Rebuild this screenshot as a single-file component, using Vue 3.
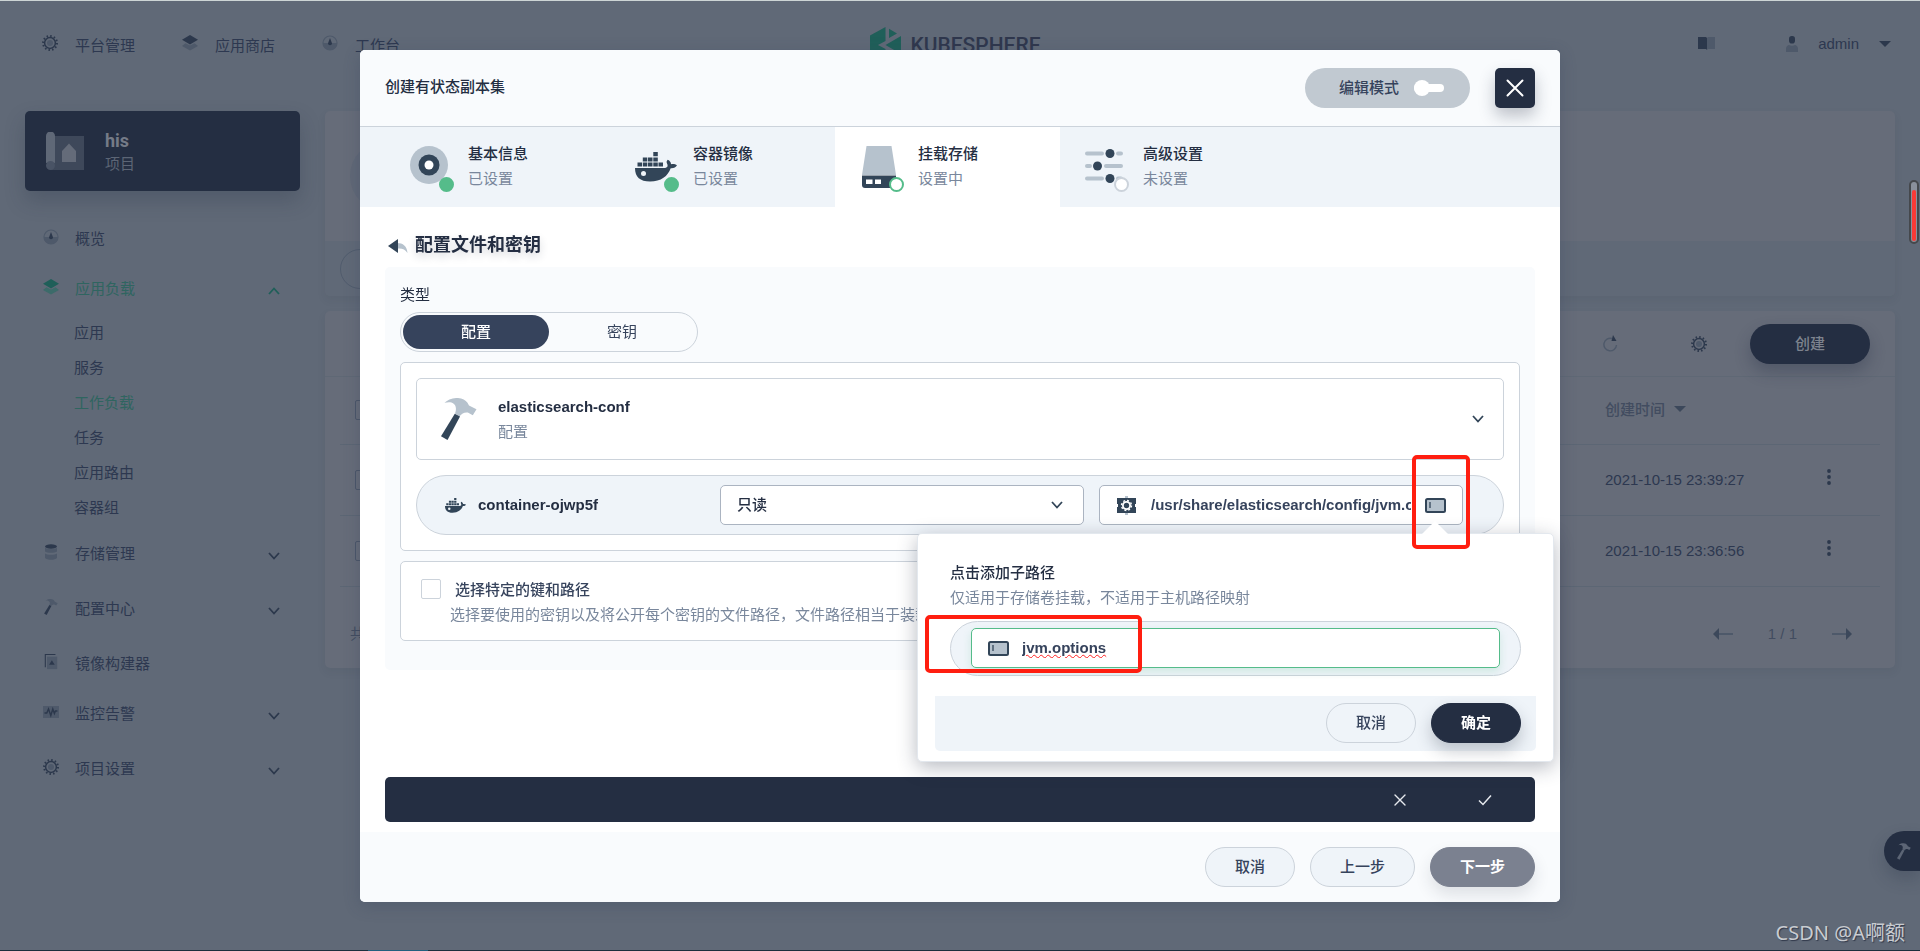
<script setup>
import { ref } from 'vue'

const topNav = [
  { label: '平台管理', icon: 'gear' },
  { label: '应用商店', icon: 'layers' },
  { label: '工作台', icon: 'dash' }
]

const menu = [
  { label: '概览', icon: 'dash' },
  {
    label: '应用负载',
    icon: 'layers',
    open: true,
    children: ['应用', '服务', '工作负载', '任务', '应用路由', '容器组']
  },
  { label: '存储管理', icon: 'db', fold: true },
  { label: '配置中心', icon: 'hammer', fold: true },
  { label: '镜像构建器', icon: 'builder' },
  { label: '监控告警', icon: 'monitor', fold: true },
  { label: '项目设置', icon: 'gear', fold: true }
]

const rows = ['2021-10-15 23:39:27', '2021-10-15 23:36:56']

const steps = [
  { title: '基本信息', note: '已设置', icon: 'disc', box: '0 0 38 38', state: 'done' },
  { title: '容器镜像', note: '已设置', icon: 'docker', box: '0 0 42 30', state: 'done' },
  { title: '挂载存储', note: '设置中', icon: 'drive', box: '0 0 34 42', state: 'now' },
  { title: '高级设置', note: '未设置', icon: 'sliders', box: '0 0 38 34', state: 'todo' }
]

const mode = ref('配置')
const access = ref('只读')
const mountPath = ref('/usr/share/elasticsearch/config/jvm.options')
const subPath = ref('jvm.options')
const pickKeys = ref(false)
</script>

<template>
  <div class="page">
    <svg class="sprite" aria-hidden="true">
      <symbol id="gear" viewBox="0 0 16 16">
        <circle class="ink-line" cx="8" cy="8" r="7" stroke-width="2" stroke-dasharray="1.500 2.165" />
        <circle class="ink-line" cx="8" cy="8" r="5.400" stroke-width="1.500" />
        <circle class="soft" cx="8" cy="8" r="3" />
      </symbol>
      <symbol id="layers" viewBox="0 0 16 16">
        <path class="soft" d="M3.500 8.200 8 10.600l4.500-2.400L16 11l-8 4.600L0 11z" />
        <path class="ink" d="M8 0l8 4.700-8 4.700-8-4.700z" />
      </symbol>
      <symbol id="dash" viewBox="0 0 16 16">
        <circle class="soft-line" cx="8" cy="8" r="7" stroke-width="1.200" />
        <path class="soft" d="M1 8h14a7 7 0 0 1-14 0z" />
        <path class="ink" d="M8 3l2 5.200a2 2 0 1 1-4 0z" />
      </symbol>
      <symbol id="db" viewBox="0 0 16 16">
        <path class="soft" d="M2 3.500c2 2 10 2 12 0v4c-2 1.800-10 1.800-12 0zM2 9.500c2 1.800 10 1.800 12 0v4.500c-2 2.400-10 2.400-12 0z" />
        <ellipse class="ink" cx="8" cy="2.500" rx="6" ry="2.200" />
      </symbol>
      <symbol id="hammer" viewBox="0 0 36 42">
        <path class="soft" d="M3.500 4.700C8 1 12 0 17 0c4.500.2 7.500 2 9.500 4.800L28 7.500l7.500 3.700-3.700 6-5-2.700c-3.500-.5-6 1-8.200 3.700L14 15.500c2-5 1-9.500-3.500-11-2.200-.5-4.500-.2-7 .2z" />
        <path class="ink" d="M13.800 15.800 19 18.500 6.500 42 0 38.300z" />
      </symbol>
      <symbol id="builder" viewBox="0 0 16 18">
        <path class="soft" d="M4 3h11v14H3.500V3z" />
        <path class="ink" d="M1 0h12v1.200H2.200V15H1zM9 7l3.200 5H5.800z" />
      </symbol>
      <symbol id="monitor" viewBox="0 0 16 16">
        <path class="soft" d="M0 2h16v12H0z" />
        <path class="ink-line" d="M1.500 9h2.300l1.700-4 2.300 6.500 2-6.500 1.600 4.500 1-2.500h2" stroke-width="1.400" />
      </symbol>
      <symbol id="disc" viewBox="0 0 38 38">
        <circle class="soft" cx="19" cy="19" r="19" />
        <circle class="ink" cx="19" cy="19" r="10.500" />
        <circle cx="19" cy="19" r="4.500" fill="#fff" />
      </symbol>
      <symbol id="docker" viewBox="0 0 42 30">
        <path class="ink" d="M2.500 10.500H7v4H2.500zM7.800 10.500h4.500v4H7.800zM13 10.500h4.500v4H13zM18.300 10.500h4.500v4h-4.500zM23.500 10.500H28v4h-4.500zM7.800 5.500h4.500v4H7.800zM13 5.500h4.500v4H13zM18.300 5.500h4.500v4h-4.500zM18.300 0h4.500v4.200h-4.500z" />
        <path class="ink" d="M0 16h29c3 0 4.500-1.500 3-4.500-.8-1.700-.2-3 .8-3.800 2 1 3.300 2.500 3.200 4.500 2-.6 4.300-.2 6 1-1.200 2.200-3.200 3.200-6.300 3C33 24 26 29.500 15 29.500 5 29.500 0 25 0 16z" />
        <circle cx="8.500" cy="21.500" r="2.500" fill="#eff4f9" />
      </symbol>
      <symbol id="drive" viewBox="0 0 34 42">
        <path class="soft" d="M4.500 0h25L34 29H0z" />
        <path class="ink" d="M0 29.500h34V39a3 3 0 0 1-3 3H3a3 3 0 0 1-3-3z" />
        <path d="M4 33.500h6.500v4.500H4zM13 33.500h6v4.500h-6z" fill="#fff" />
      </symbol>
      <symbol id="sliders" viewBox="0 0 38 34">
        <g class="soft">
          <rect x="0" y="2.500" width="19" height="4" rx="2" /><rect x="31" y="2.500" width="7" height="4" rx="2" />
          <rect x="0" y="15" width="7" height="4" rx="2" /><rect x="19" y="15" width="19" height="4" rx="2" />
          <rect x="0" y="27.500" width="19" height="4" rx="2" /><rect x="31" y="27.500" width="7" height="4" rx="2" />
        </g>
        <g class="ink">
          <circle cx="25" cy="4.500" r="4.500" /><circle cx="12.500" cy="17" r="4.500" /><circle cx="25" cy="29.500" r="4.500" />
        </g>
      </symbol>
      <symbol id="chevron" viewBox="0 0 12 12">
        <path class="ink-line" d="M1 3l5 5.500L11 3" stroke-width="1.800" />
      </symbol>
      <symbol id="cross" viewBox="0 0 18 18">
        <path d="M1.500 1.500l15 15M16.500 1.500l-15 15" fill="none" stroke="currentColor" stroke-width="2" stroke-linecap="round" />
      </symbol>
      <symbol id="folder" viewBox="0 0 21 15">
        <rect x="1" y="1" width="19" height="13" rx="1.500" fill="#b6c2cd" stroke="#324558" stroke-width="2" />
        <path d="M5 4v6" stroke="#324558" stroke-width="1.300" />
      </symbol>
    </svg>

    <header class="top">
      <nav class="top-nav">
        <a v-for="n in topNav" :key="n.label" href="#">
          <svg class="i16"><use :href="'#' + n.icon" /></svg>{{ n.label }}
        </a>
      </nav>
      <div class="logo">
        <svg viewBox="0 0 31 36" width="31" height="36" aria-hidden="true">
          <path d="M0 8.500 15.500 0v14L8 18l7.500 4v14L0 27.500zM19 1.800 27 6.500 19 11zM31 9v18L15.500 18z" fill="#1f5f59" />
        </svg>
        KUBESPHERE
      </div>
      <div class="top-user">
        <button class="bare book" aria-label="文档">
          <svg width="17" height="13" viewBox="0 0 17 13"><path class="ink" d="M0 0h8l1 1v12l-1-1H0z" /><path class="soft" d="M9 1l1-1h7v12h-7l-1 1z" /></svg>
        </button>
        <button class="bare user">
          <svg width="12" height="16" viewBox="0 0 12 16"><rect class="ink" x="3" y="0" width="6" height="7.500" rx="2.800" /><path class="soft" d="M0 13c0-3 2-4 3-4 1.500 1 4.500 1 6 0 1 0 3 1 3 4v3H0z" /></svg>
          <span>admin</span>
          <i class="caret"></i>
        </button>
      </div>
    </header>

    <div class="cols">
      <aside>
        <div class="project">
          <svg viewBox="0 0 38 38" width="38" height="38" aria-hidden="true">
            <path d="M8 4h30v34H4V30z" fill="#3e485a" />
            <path d="M0 4a4.500 4.500 0 0 1 9 0v27H0z" fill="#5f6877" />
            <circle cx="4.500" cy="33.500" r="4.500" fill="#495365" />
            <path d="M16 19l7-7.500 7 7.500v11H16z" fill="#646b79" />
          </svg>
          <div>
            <strong>his</strong>
            <p>项目</p>
          </div>
        </div>
        <ul class="menu">
          <li v-for="m in menu" :key="m.label" :class="{ open: m.open, fold: m.fold }">
            <a href="#">
              <svg class="i16"><use :href="'#' + m.icon" /></svg>
              <span>{{ m.label }}</span>
              <svg v-if="m.open || m.fold" class="i12"><use href="#chevron" /></svg>
            </a>
            <ul v-if="m.children">
              <li v-for="c in m.children" :key="c" :class="{ on: c === '工作负载' }"><a href="#">{{ c }}</a></li>
            </ul>
          </li>
        </ul>
      </aside>

      <main>
        <section class="card banner">
          <div class="banner-main"><span class="avatar"></span></div>
          <div class="banner-foot"><span class="ghost-pill"></span></div>
        </section>
        <section class="card">
          <div class="tools">
            <button class="bare" aria-label="刷新">
              <svg width="16" height="18" viewBox="0 0 16 18"><path class="soft-line" d="M9 3.500A6.300 6.300 0 1 0 13.500 10" stroke-width="1.400" /><path class="ink" d="M10 0l3.500 6H8.500z" /></svg>
            </button>
            <button class="bare" aria-label="设置"><svg class="i16"><use href="#gear" /></svg></button>
            <button class="create">创建</button>
          </div>
          <table>
            <thead>
              <tr>
                <th><input type="checkbox" aria-label="全选" /></th>
                <th class="time">创建时间 <i class="caret"></i></th>
                <th class="more"></th>
              </tr>
            </thead>
            <tbody>
              <tr v-for="r in rows" :key="r">
                <td><input type="checkbox" :aria-label="r" /></td>
                <td class="time">{{ r }}</td>
                <td class="more">
                  <button class="bare" aria-label="更多操作">
                    <svg width="4" height="18" viewBox="0 0 4 18"><circle class="ink" cx="2" cy="3" r="1.900" /><circle class="ink" cx="2" cy="9" r="1.900" /><circle class="ink" cx="2" cy="15" r="1.900" /></svg>
                  </button>
                </td>
              </tr>
            </tbody>
          </table>
          <div class="pager">
            <span class="total">共</span>
            <button class="bare" aria-label="上一页"><svg width="20" height="12" viewBox="0 0 20 12"><path class="soft" d="M5 5h15v2H5z" /><path class="mid" d="M0 6l6-6v12z" /></svg></button>
            <span>1 / 1</span>
            <button class="bare" aria-label="下一页"><svg width="20" height="12" viewBox="0 0 20 12"><path class="soft" d="M0 5h15v2H0z" /><path class="mid" d="M20 6l-6-6v12z" /></svg></button>
          </div>
        </section>
      </main>
    </div>

    <button class="toolbox" aria-label="工具箱"><svg width="14" height="17"><use href="#hammer" /></svg></button>
    <div class="scroll-mark"><i></i></div>
    <div class="watermark">CSDN @A啊额</div>
    <div class="edge"><i></i></div>

    <div class="mask">
      <div class="modal" role="dialog" aria-label="创建有状态副本集">
        <div class="modal-head">
          <h1>创建有状态副本集</h1>
          <button class="mode">编辑模式 <i class="switch"></i></button>
          <button class="close" aria-label="关闭"><svg width="18" height="18"><use href="#cross" /></svg></button>
        </div>

        <ol class="steps">
          <li v-for="s in steps" :key="s.title" :class="s.state">
            <div class="pic"><svg :viewBox="s.box" :class="s.icon"><use :href="'#' + s.icon" /></svg><i></i></div>
            <div class="step-text">
              <b>{{ s.title }}</b>
              <p>{{ s.note }}</p>
            </div>
          </li>
        </ol>

        <div class="body">
          <h2>
            <button class="bare" aria-label="返回">
              <svg width="20" height="14" viewBox="0 0 20 14"><path class="soft" d="M9 4c6 0 10 3 10.500 10C17 10 14 9 9 9.500z" /><path class="ink" d="M0 7l10-7v14z" /></svg>
            </button>
            配置文件和密钥
          </h2>

          <div class="panel">
            <div class="label">类型</div>
            <div class="segment">
              <button v-for="m in ['配置', '密钥']" :key="m" :class="{ on: mode === m }" @click="mode = m">{{ m }}</button>
            </div>

            <div class="box">
              <button class="config">
                <svg width="36" height="42"><use href="#hammer" /></svg>
                <span><b>elasticsearch-conf</b><small>配置</small></span>
                <svg class="i12"><use href="#chevron" /></svg>
              </button>

              <div class="container">
                <svg width="21" height="15"><use href="#docker" /></svg>
                <b>container-ojwp5f</b>
                <div class="field">
                  <select v-model="access" aria-label="读写模式"><option>只读</option></select>
                  <svg class="i12"><use href="#chevron" /></svg>
                </div>
                <div class="field path">
                  <svg width="19" height="19" viewBox="0 0 19 19" aria-hidden="true">
                    <path class="soft" d="M8 0h3v19H8z" />
                    <path class="ink" d="M0 2h19v6h-1v3h1v6H0v-6h1V8H0z" />
                    <circle cx="9.500" cy="9.500" r="5" fill="none" stroke="#fff" stroke-width="1.400" stroke-dasharray="1.960 1.960" />
                    <circle cx="9.500" cy="9.500" r="3.600" fill="none" stroke="#fff" stroke-width="1.800" />
                  </svg>
                  <input v-model="mountPath" type="text" aria-label="挂载路径" spellcheck="false" />
                  <button class="bare" aria-label="添加子路径"><svg width="21" height="15"><use href="#folder" /></svg></button>

                  <div class="pop">
                    <div class="pop-main">
                      <label for="sub">点击添加子路径</label>
                      <p>仅适用于存储卷挂载，不适用于主机路径映射</p>
                      <div class="sub">
                        <div class="sub-field">
                          <svg width="21" height="15"><use href="#folder" /></svg>
                          <input id="sub" v-model="subPath" type="text" spellcheck="false" />
                        </div>
                        <span class="red sub-red"></span>
                      </div>
                    </div>
                    <div class="pop-foot">
                      <button class="btn">取消</button>
                      <button class="btn dark">确定</button>
                    </div>
                  </div>
                  <span class="red path-red"></span>
                </div>
              </div>
            </div>

            <div class="box keys">
              <input id="keys" v-model="pickKeys" type="checkbox" />
              <div>
                <label for="keys">选择特定的键和路径</label>
                <p>选择要使用的密钥以及将公开每个密钥的文件路径，文件路径相当于装载路径</p>
              </div>
            </div>
          </div>

          <div class="confirm">
            <button class="bare" aria-label="放弃"><svg width="12" height="12"><use href="#cross" /></svg></button>
            <button class="bare" aria-label="确认"><svg width="14" height="12" viewBox="0 0 14 12"><path d="M1 6.500l4 4L13 1.500" fill="none" stroke="currentColor" stroke-width="1.500" /></svg></button>
          </div>
        </div>

        <div class="modal-foot">
          <button class="btn">取消</button>
          <button class="btn">上一步</button>
          <button class="btn dark off">下一步</button>
        </div>
      </div>
    </div>
  </div>
</template>

<style>
body {
  margin: 0;
  background: #606977;
}
</style>

<style scoped>
.page {
  --ink: #2c384c;
  --soft: #4e596a;
  position: relative;
  box-sizing: border-box;
  min-height: 100vh;
  overflow: hidden;
  border-top: 1px solid #cdd5d5;
  background: #606977;
  color: #2d3850;
  font: 15px/20px "Liberation Sans", "Noto Sans CJK SC", sans-serif;
}
.page *,
.page *::before {
  box-sizing: border-box;
}
.sprite {
  position: absolute;
  width: 0;
  height: 0;
}
.ink { fill: var(--ink); }
.soft { fill: var(--soft); }
.mid { fill: #3c485b; }
.ink-line { fill: none; stroke: var(--ink); }
.soft-line { fill: none; stroke: var(--soft); }
svg { display: block; flex: none; }
.i16 { width: 16px; height: 16px; }
.i12 { width: 12px; height: 12px; }
a { color: inherit; text-decoration: none; }
p, h1, h2, ul, ol { margin: 0; padding: 0; }
ul, ol { list-style: none; }
button, input, select { font: inherit; color: inherit; }
button { padding: 0; cursor: pointer; }
.bare { border: 0; background: none; }
.caret {
  display: inline-block;
  border: 6px solid transparent;
  border-top-color: var(--ink);
  border-bottom: 0;
}

/* top bar */
.top {
  display: grid;
  grid-template-columns: 1fr auto 1fr;
  align-items: center;
  height: 85px;
  padding: 0 29px 0 20px;
}
.top-nav { display: flex; gap: 47px; padding: 4px 0 0 22px; }
.top-nav a { display: flex; align-items: center; gap: 17px; }
.top-nav svg { margin-bottom: 6px; }
.logo {
  display: flex;
  align-items: center;
  gap: 9px;
  padding-top: 2px;
  color: #2f374d;
  font: 500 21px/36px Roboto, sans-serif;
}
.top-user { display: flex; justify-content: flex-end; gap: 71px; }
.user { display: flex; align-items: center; gap: 20px; }

/* sidebar */
.cols { display: flex; gap: 25px; padding: 25px; }
aside { flex: 0 0 275px; }
.project {
  display: flex;
  align-items: center;
  gap: 21px;
  height: 80px;
  padding: 0 21px;
  border-radius: 5px;
  background: #242e42;
  box-shadow: 0 10px 20px #242e4240;
  color: #5c6575;
}
.project strong { color: #757b87; font: bold 18px/26px Roboto, sans-serif; }
.menu { padding-top: 23px; }
.menu > li > a { display: flex; align-items: center; height: 50px; padding: 0 20px 0 18px; }
.menu > li > a > .i16 { margin-bottom: 4px; }
.menu > li > a > span { flex: 1; padding-left: 16px; }
.menu .i12 { margin-top: 4px; }
.fold { padding-bottom: 5px; }
.open { --ink: #1f5f59; --soft: #3c6b6a; color: #2f6560; }
.open .i12 { transform: rotate(180deg); }
.open ul { padding: 1px 0 4px 49px; color: #2d3850; }
.open li { line-height: 35px; }
.open .on { color: #2f6560; }

/* page content */
main { flex: 1; min-width: 0; }
.card {
  margin-bottom: 15px;
  overflow: hidden;
  border-radius: 5px;
  background: #666c79;
  box-shadow: 0 4px 8px #242e4214;
}
.banner-main { display: flex; align-items: center; height: 130px; padding-left: 25px; }
.avatar { width: 70px; height: 70px; border-radius: 50%; background: #606877; }
.banner-foot { padding: 8px 15px 7px; background: #606977; }
.ghost-pill { display: block; width: 120px; height: 40px; border: 1px solid #515c6d; border-radius: 20px; }
.tools {
  display: flex;
  align-items: center;
  justify-content: flex-end;
  height: 66px;
  padding-right: 25px;
  border-bottom: 1px solid #5f6875;
}
.tools .bare { margin-right: 72px; }
.tools .bare + .bare { margin-right: 43px; }
.create {
  width: 120px;
  height: 40px;
  border: 0;
  border-radius: 20px;
  background: #242e42;
  box-shadow: 0 8px 16px #242e4250;
  color: #7d838e;
  font-weight: 500;
}
table { width: calc(100% - 30px); margin: 0 15px; border-collapse: collapse; table-layout: fixed; }
th, td { height: 71px; padding: 0 15px; border-bottom: 1px solid #5c6674; text-align: left; }
th { height: 67px; color: #424c60; font-weight: 500; }
th .caret { margin: 0 0 3px 5px; border-top-color: #3c485b; }
.time { width: 188px; white-space: nowrap; }
.more { width: 102px; text-align: center; }
.more svg { display: inline-block; }
table input {
  display: block;
  width: 20px;
  height: 20px;
  margin: 0;
  appearance: none;
  border: 1px solid #4b5668;
  border-radius: 2px;
}
.pager {
  display: flex;
  align-items: center;
  gap: 35px;
  height: 68px;
  margin-top: 13px;
  padding: 0 43px 0 25px;
  color: #424c60;
}
.total { flex: 1; }

/* overlays at the window edge */
.toolbox {
  --ink: #5c6575;
  --soft: #5c6575;
  position: absolute;
  top: 830px;
  right: 0;
  width: 36px;
  height: 40px;
  padding-left: 13px;
  border: 0;
  border-radius: 20px 0 0 20px;
  background: #242e42;
  box-shadow: 0 8px 16px #242e4240;
}
.scroll-mark {
  position: absolute;
  top: 179px;
  right: 1px;
  width: 10px;
  height: 64px;
  padding: 8px 1px 1px;
  border: 2px solid #45484c;
  border-radius: 5px;
  background: #8a909b;
}
.scroll-mark i { display: block; height: 100%; border-radius: 2px; background: #f93a36; }
.watermark {
  position: absolute;
  right: 15px;
  bottom: 5px;
  color: #c9ccd1;
  font: 20px/26px "Noto Sans", "Noto Sans CJK SC", sans-serif;
  text-shadow: 1px 1px 1px #30384a;
}
.edge { position: absolute; right: 0; bottom: 0; left: 0; height: 1px; background: #1b2f3d; }
.edge i { display: block; width: 60px; height: 1px; margin-left: 368px; background: #22607e; }

/* dialog */
.mask {
  position: fixed;
  inset: 0;
  display: flex;
  justify-content: center;
  padding: 50px 0 49px;
  pointer-events: none;
}
.modal {
  --ink: #324558;
  --soft: #b6c2cd;
  display: flex;
  flex-direction: column;
  width: 1200px;
  border-radius: 5px;
  background: #fff;
  box-shadow: 0 4px 16px #36435c50;
  color: #242e42;
  pointer-events: auto;
}
.modal-head {
  display: flex;
  align-items: center;
  padding: 18px 25px;
  border-bottom: 1px solid #ccd3db;
  border-radius: 5px 5px 0 0;
  background: #f9fbfd;
}
h1 { flex: 1; padding-bottom: 2px; font-size: 15px; font-weight: 500; line-height: 20px; }
.mode {
  display: flex;
  align-items: center;
  justify-content: flex-end;
  gap: 15px;
  width: 165px;
  height: 40px;
  margin-right: 25px;
  padding-right: 26px;
  border: 0;
  border-radius: 20px;
  background: #c1c9d1;
  color: #36435c;
  font-weight: 500;
}
.switch { position: relative; width: 30px; height: 8px; border-radius: 4px; background: #fff; }
.switch::before {
  content: "";
  position: absolute;
  top: -4px;
  left: 0;
  width: 16px;
  height: 16px;
  border-radius: 50%;
  background: #fff;
}
.close {
  display: grid;
  place-items: center;
  width: 40px;
  height: 40px;
  border: 0;
  border-radius: 5px;
  background: #242e42;
  box-shadow: 0 8px 16px #242e4248;
  color: #fff;
}
.steps { display: flex; padding-left: 25px; background: #eff4f9; }
.steps li { display: flex; align-items: center; gap: 20px; width: 225px; height: 80px; padding-left: 25px; }
.steps .now { background: #fff; }
.step-text { padding-bottom: 2px; }
.steps b { font-weight: 500; line-height: 25px; }
.steps p { color: #79879c; line-height: 25px; }
.pic { position: relative; display: grid; place-items: center; width: 38px; height: 42px; }
.disc { width: 38px; height: 38px; margin-bottom: 4px; }
.docker { width: 42px; height: 30px; }
.drive { width: 34px; height: 42px; }
.sliders { width: 38px; height: 34px; margin-bottom: 2px; }
.pic i {
  position: absolute;
  right: -6px;
  bottom: -4px;
  width: 15px;
  height: 15px;
  border: 2px solid #ccd3db;
  border-radius: 50%;
  background: #fff;
}
.done .pic i { border-color: #55bc8a; background: #55bc8a; }
.now .pic i { border-color: #55bc8a; }

.body { flex: 1; display: flex; flex-direction: column; padding: 25px 25px 10px; }
h2 {
  display: flex;
  align-items: center;
  gap: 7px;
  padding: 1px 0 9px 3px;
  font-size: 18px;
  line-height: 25px;
  text-shadow: 0 4px 8px #242e4233;
}
.panel { padding: 15px 15px 29px; border-radius: 5px; background: #f9fbfd; }
.label { line-height: 25px; margin-bottom: 5px; }
.segment {
  display: grid;
  grid-template-columns: 1fr 1fr;
  width: 298px;
  height: 40px;
  padding: 2px;
  border: 1px solid #ccd3db;
  border-radius: 20px;
}
.segment button { border: 0; border-radius: 18px; background: none; color: #36435c; }
.segment .on { background: #36435c; color: #fff; font-weight: 500; }
.box { margin-top: 10px; padding: 15px; border: 1px solid #ccd3db; border-radius: 5px; background: #fff; }
.config {
  display: flex;
  align-items: center;
  gap: 21px;
  width: 100%;
  height: 82px;
  padding: 0 19px 0 24px;
  border: 1px solid #ccd3db;
  border-radius: 5px;
  background: #fff;
  text-align: left;
}
.config span { flex: 1; line-height: 25px; }
.config b, .config small { display: block; }
.config small { color: #79879c; font-size: 15px; }
.container {
  display: flex;
  align-items: center;
  gap: 12px;
  height: 60px;
  margin-top: 15px;
  padding: 0 40px 0 28px;
  border: 1px solid #ccd3db;
  border-radius: 30px;
  background: #eff4f9;
}
.container > b { flex: 1; }
.field {
  position: relative;
  display: flex;
  align-items: center;
  width: 364px;
  height: 40px;
  padding: 0 20px 0 16px;
  border: 1px solid #abb4c1;
  border-radius: 5px;
  background: #fff;
}
.field select {
  flex: 1;
  height: 100%;
  padding: 0;
  appearance: none;
  border: 0;
  background: none;
  font-weight: 500;
}
.field > .i12 { pointer-events: none; }
.field.path { margin-left: 3px; padding: 0 16px 0 17px; color: #36435c; }
.field input {
  flex: 1;
  min-width: 0;
  padding: 0;
  border: 0;
  outline: 0;
  background: none;
  font-weight: bold;
}
.path > input { margin: 0 14px 0 15px; }

.pop {
  position: absolute;
  z-index: 1;
  top: 47px;
  right: -92px;
  width: 637px;
  padding: 26px 17px 10px;
  border: 1px solid #e3e8ee;
  border-radius: 5px;
  background: #fff;
  box-shadow: 0 5px 20px #242e4255;
}
.pop::before {
  content: "";
  position: absolute;
  top: -13px;
  right: 105px;
  border: 13px solid transparent;
  border-top: 0;
  border-bottom-color: #fff;
}
.pop-main { padding: 0 15px; }
.pop label { display: block; color: #242e42; font-weight: 500; line-height: 25px; }
.pop p { color: #79879c; line-height: 25px; }
.sub {
  position: relative;
  height: 55px;
  margin: 11px 0 20px;
  padding: 6px 20px;
  border: 1px solid #ccd3db;
  border-radius: 28px;
  background: #eff4f9;
}
.sub-field {
  display: flex;
  align-items: center;
  gap: 13px;
  height: 40px;
  padding: 0 16px;
  border: 1px solid #55bc8a;
  border-radius: 5px;
  background: #fff;
  box-shadow: 0 4px 8px #55bc8a33;
}
.sub-field input { text-decoration: underline wavy #f22 1px; text-underline-offset: 1px; }
.pop-foot { display: flex; justify-content: flex-end; gap: 15px; padding: 7px 15px 8px; border-radius: 0 0 5px 5px; background: #eff4f9; }

.red { position: absolute; z-index: 2; border: 4px solid #ff1e10; border-radius: 5px; pointer-events: none; }
.path-red { top: -31px; right: -8px; width: 58px; height: 94px; }
.sub-red { top: -7px; left: -26px; width: 217px; height: 58px; }

.keys { display: flex; gap: 9px; padding: 15px 20px 13px; }
.keys input {
  width: 20px;
  height: 20px;
  margin: 2px 0 0;
  appearance: none;
  border: 1px solid #ccd3db;
  border-radius: 2px;
  background: #fff;
}
.keys label { display: block; padding-left: 5px; color: #36435c; font-weight: 500; line-height: 25px; }
.keys p { color: #79879c; line-height: 25px; }

.confirm {
  display: flex;
  align-items: center;
  justify-content: flex-end;
  gap: 72px;
  height: 45px;
  margin-top: auto;
  padding-right: 43px;
  border-radius: 5px;
  background: #242e42;
  color: #e6e9ee;
}
.modal-foot {
  display: flex;
  justify-content: flex-end;
  gap: 15px;
  padding: 15px 25px;
  border-radius: 0 0 5px 5px;
  background: #f9fbfd;
}
.btn {
  height: 40px;
  padding: 0 29px;
  border: 1px solid #ccd3db;
  border-radius: 20px;
  background: #eff4f9;
  color: #36435c;
  font-weight: 500;
}
.btn.dark {
  border-color: #242e42;
  background: #242e42;
  box-shadow: 0 8px 16px #242e4240;
  color: #fff;
  font-weight: bold;
}
.btn.off { border-color: #7b8190; background: #7b8190; box-shadow: 0 8px 16px #242e4220; }
</style>
